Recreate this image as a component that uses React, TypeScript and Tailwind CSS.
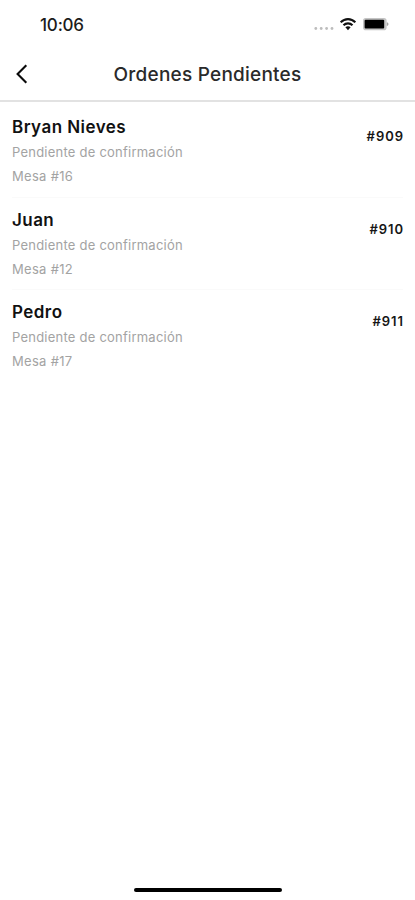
import React from 'react';

interface Order {
  id: number;
  customer: string;
  status: string;
  table: number;
}

const orders: Order[] = [
  { id: 909, customer: 'Bryan Nieves', status: 'Pendiente de confirmación', table: 16 },
  { id: 910, customer: 'Juan', status: 'Pendiente de confirmación', table: 12 },
  { id: 911, customer: 'Pedro', status: 'Pendiente de confirmación', table: 17 },
];

function StatusBar() {
  return (
    <div className="flex h-12 items-center justify-between pl-10 pr-[26px]">
      <span className="pt-0.5 text-[17px] font-medium leading-6 tracking-[-0.2px] text-[#1c1c1c]">10:06</span>
      <div className="flex items-center">
        <svg className="h-4 w-5" viewBox="0 0 20 16" fill="#bdbdbd">
          <circle cx="1.8" cy="12.5" r="1.4" />
          <circle cx="7.2" cy="12.5" r="1.4" />
          <circle cx="12.6" cy="12.5" r="1.4" />
          <circle cx="18" cy="12.5" r="1.4" />
        </svg>
        <svg className="ml-1.5 h-4 w-4" viewBox="0 0 16 16" fill="none" stroke="#111111" strokeWidth="2.1">
          <path d="M0.7 6.4C4.8 2 11.2 2 15.3 6.4" />
          <path d="M3.5 9.3C6 6.7 10 6.7 12.5 9.3" />
          <path d="M5.4 11.3C6.9 9.9 9.1 9.9 10.6 11.3L8 14.2Z" fill="#111111" stroke="none" />
        </svg>
        <svg className="ml-[7px] h-4 w-[26px]" viewBox="0 0 26 16">
          <rect x="0.6" y="2.6" width="22.4" height="11" rx="2.2" fill="#cccccc" stroke="#c4c4c4" strokeWidth="1.2" />
          <rect x="1.6" y="3.8" width="19.6" height="8.8" rx="1" fill="#000000" />
          <path d="M23.8 6.2C26 6.8 26 9.4 23.8 10Z" fill="#a5a5a5" />
        </svg>
      </div>
    </div>
  );
}

function Header() {
  return (
    <header className="relative flex h-[54px] items-center justify-center border-b-2 border-[#e2e2e2]">
      <button type="button" aria-label="Volver" className="absolute left-[15px] top-4">
        <svg className="h-5 w-3.5" viewBox="0 0 14 20" fill="none" stroke="#0a0a0a" strokeWidth="2.1">
          <path d="M11.3 1.2L2.6 10L11.3 18.8" />
        </svg>
      </button>
      <h1 className="pt-0.5 text-[19px] font-medium leading-6 tracking-[0.23px] text-[#2a2a2a]">Ordenes Pendientes</h1>
    </header>
  );
}

function OrderRow({ order }: { order: Order }) {
  return (
    <li className="mx-3 flex h-[92.2px] justify-between border-b border-[#fafafa] pt-2.5 last:border-b-0">
      <div>
        <h2 className="text-[17px] font-semibold leading-6 tracking-[0.45px] text-[#111111]">{order.customer}</h2>
        <p className="mt-px text-[13px] leading-6 tracking-[0.23px] text-[#a3a3a3]">{order.status}</p>
        <p className="text-[13px] leading-6 tracking-[0.3px] text-[#a3a3a3]">Mesa #{order.table}</p>
      </div>
      <span className="-mr-px pt-[9px] text-[13px] font-semibold leading-6 tracking-[0.95px] text-[#161616]">#{order.id}</span>
    </li>
  );
}

export default function App() {
  return (
    <div className="flex h-[900px] w-[415px] flex-col overflow-hidden bg-white font-['Inter',sans-serif]">
      <StatusBar />
      <Header />
      <ul className="flex-1 pt-[3.4px]">
        {orders.map(order => (
          <OrderRow key={order.id} order={order} />
        ))}
      </ul>
      <div className="mb-2 ml-[134px] h-[4.5px] w-[148px] rounded-full bg-black" />
    </div>
  );
}
